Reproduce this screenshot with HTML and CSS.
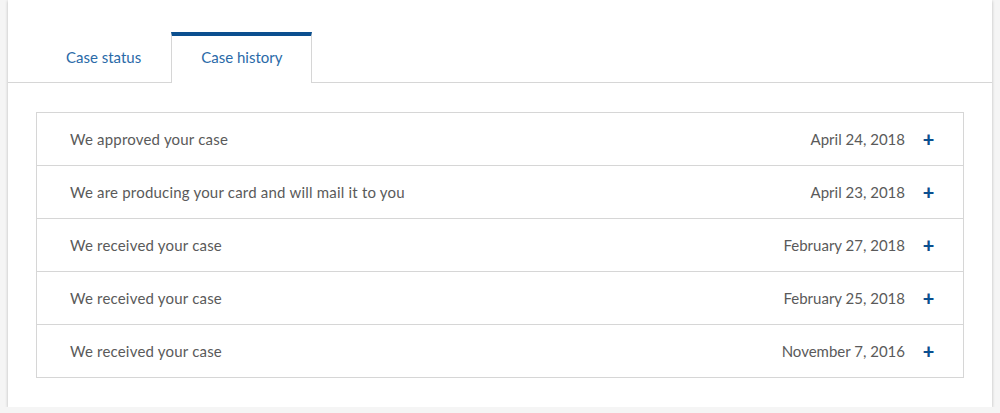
FILE: index.html
```html
<!DOCTYPE html>
<html lang="en">
<head>
    <meta charset="UTF-8">
    <meta name="viewport" content="width=device-width, initial-scale=1.0">
    <title>Case history</title>
    <link rel="stylesheet" href="styles.css">
</head>
<body>
    <div class="card">
        <ul class="tabs">
            <li class="tab">Case status</li>
            <li class="tab active">Case history</li>
        </ul>

        <div class="history">
            <div class="history-row">
                <span class="event">We approved your case</span>
                <span class="date">April 24, 2018</span>
                <span class="toggle">+</span>
            </div>
            <div class="history-row">
                <span class="event">We are producing your card and will mail it to you</span>
                <span class="date">April 23, 2018</span>
                <span class="toggle">+</span>
            </div>
            <div class="history-row">
                <span class="event">We received your case</span>
                <span class="date">February 27, 2018</span>
                <span class="toggle">+</span>
            </div>
            <div class="history-row">
                <span class="event">We received your case</span>
                <span class="date">February 25, 2018</span>
                <span class="toggle">+</span>
            </div>
            <div class="history-row">
                <span class="event">We received your case</span>
                <span class="date">November 7, 2016</span>
                <span class="toggle">+</span>
            </div>
        </div>
    </div>
</body>
</html>
```

FILE: styles.css
```css
body {
    margin: 0;
    padding: 0 8px;
    background-color: #f5f5f5;
    font-family: Lato, "Open Sans", Arial, sans-serif;
    color: #555;
}

.card {
    background-color: #fff;
    box-shadow: 0 1px 3px rgba(0, 0, 0, 0.25);
    padding-bottom: 29px;
}

/* Tabs */
.tabs {
    list-style: none;
    margin: 0;
    padding: 32px 0 0 28px;
    display: flex;
    border-bottom: 1px solid #d6d6d6;
}

.tab {
    padding: 0 29px 4px;
    height: 42px;
    line-height: 42px;
    margin-bottom: -1px;
    font-size: 15px;
    color: #2a6aa8;
    border-top: 4px solid transparent;
    border-left: 1px solid transparent;
    border-right: 1px solid transparent;
    cursor: pointer;
}

.tab.active {
    border-top-color: #0b4f8f;
    border-left-color: #d6d6d6;
    border-right-color: #d6d6d6;
    background-color: #fff;
    padding-bottom: 5px;
}

/* History list */
.history {
    margin: 29px 28px 0 28px;
    border: 1px solid #d6d6d6;
}

.history-row {
    display: flex;
    align-items: center;
    height: 52px;
    padding: 0 28px 0 33px;
    font-size: 15px;
    color: #5a5a5a;
    border-top: 1px solid #d6d6d6;
}

.history-row:first-child {
    border-top: none;
}

.event {
    flex: 1;
    letter-spacing: 0.2px;
}

.date {
    margin-right: 17px;
}

.toggle {
    width: 13px;
    text-align: center;
    color: #0b4f8f;
    font-weight: 900;
    font-size: 20px;
}
```
